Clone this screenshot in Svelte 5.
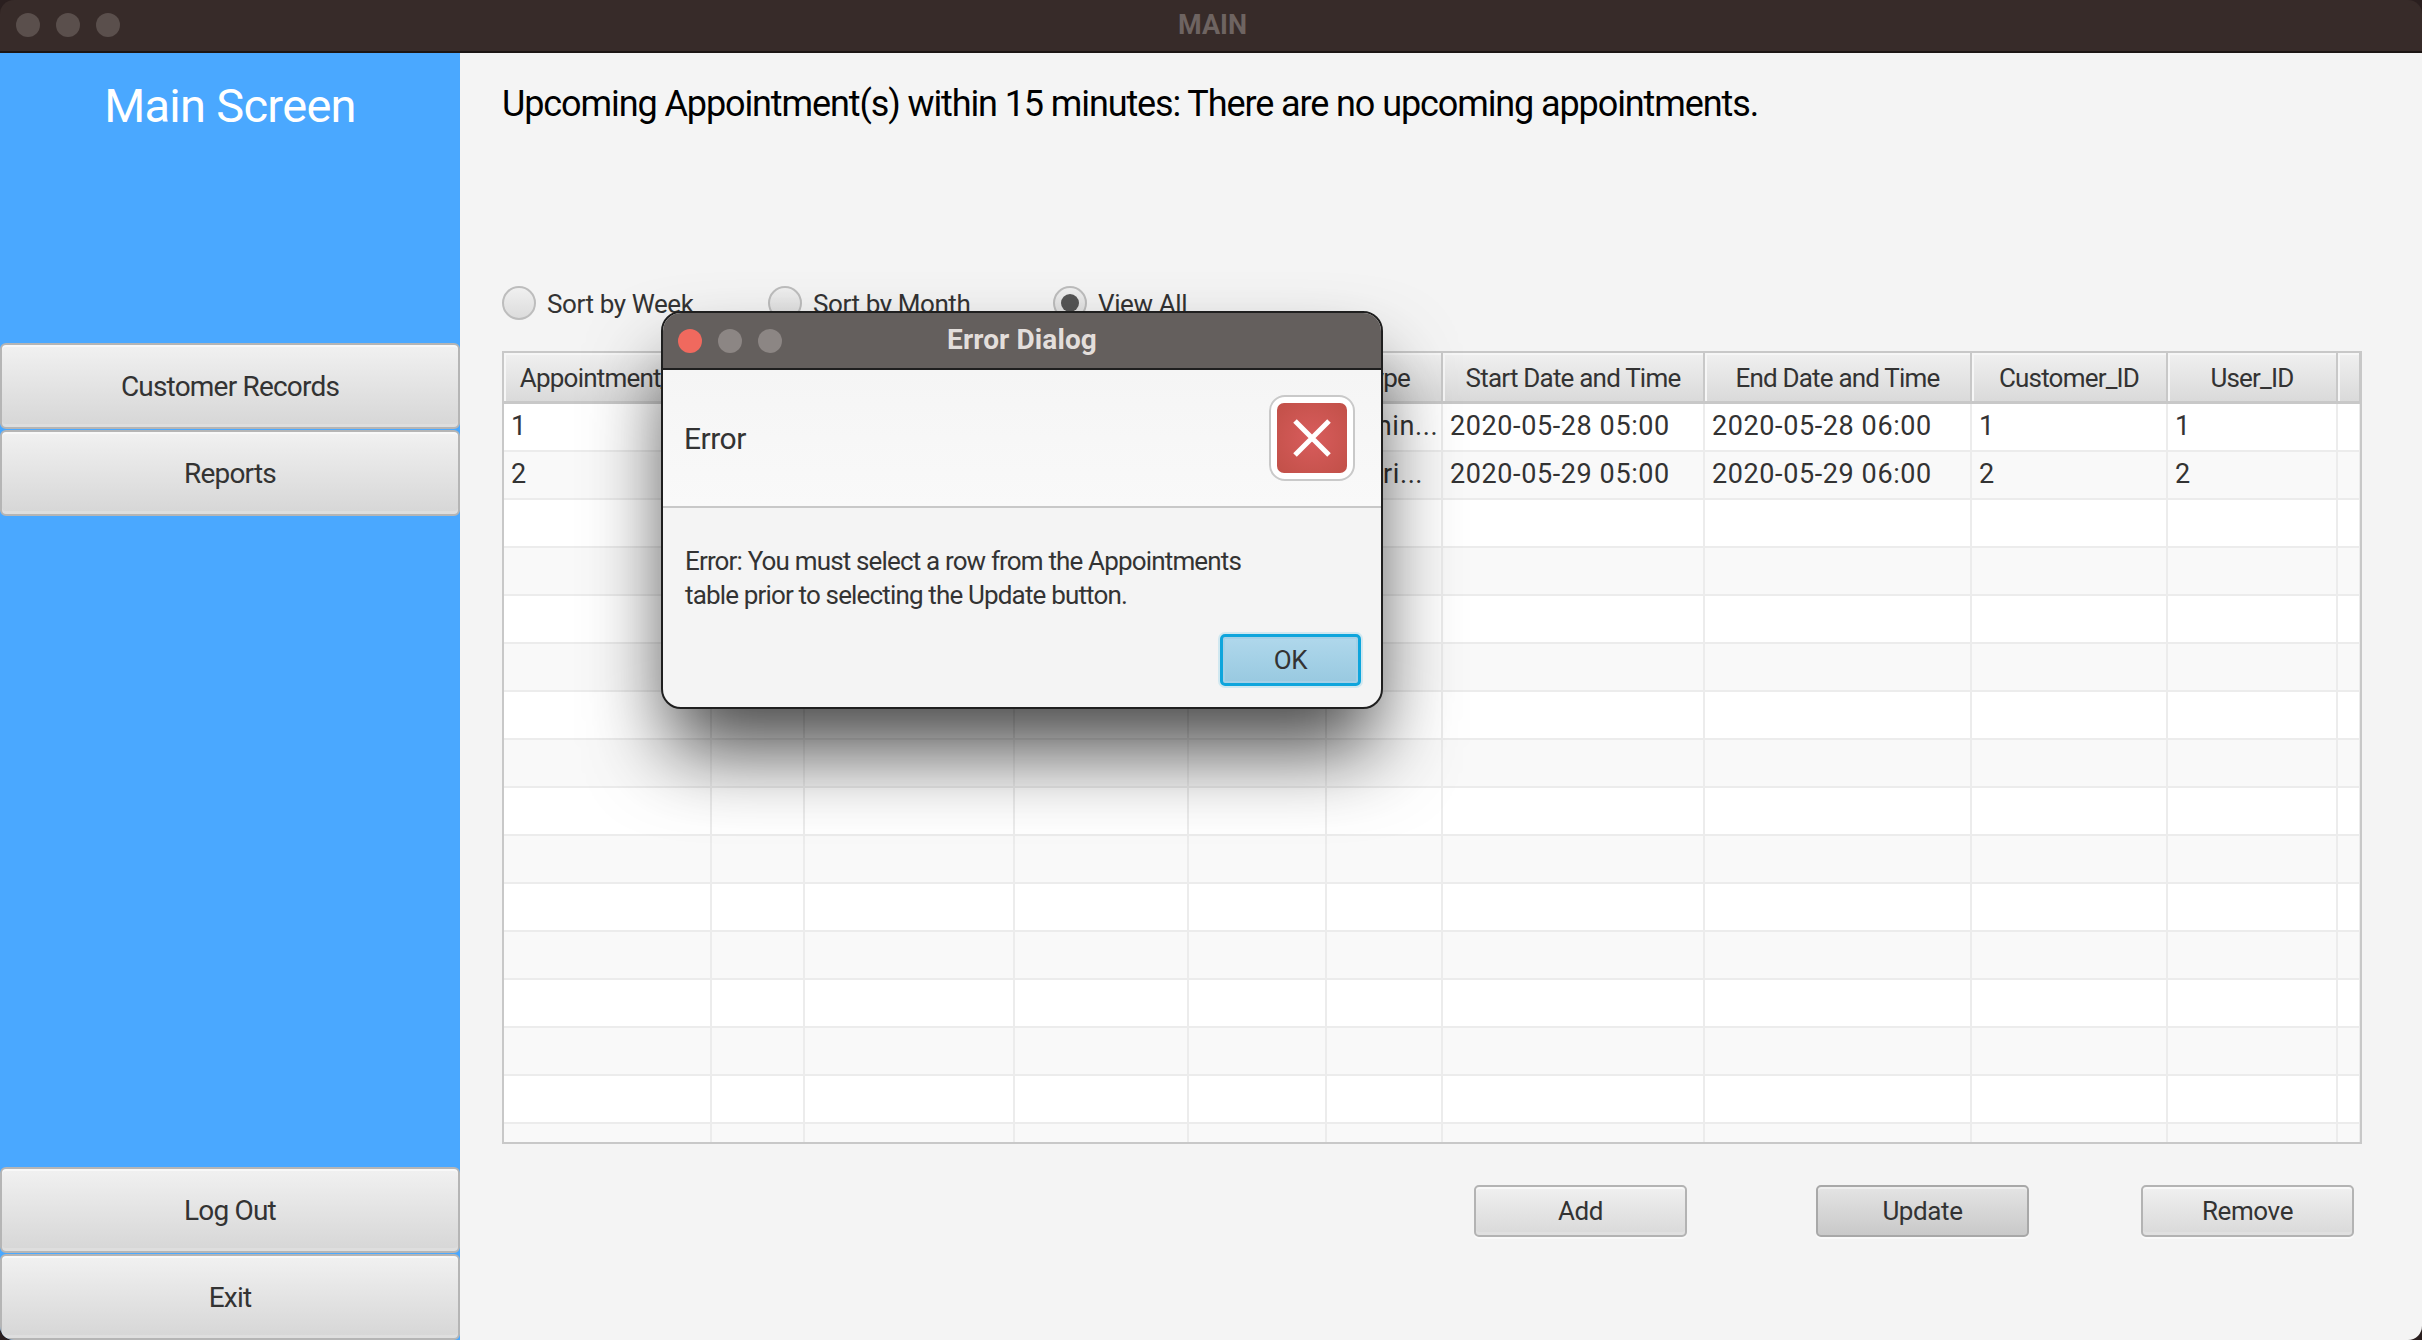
<script>
  const widths = [208, 93, 210, 174, 138, 116, 262, 267, 196, 170, 23];
  const headers = ['Appointment_ID', '', '', '', '', 'Type', 'Start Date and Time', 'End Date and Time', 'Customer_ID', 'User_ID', ''];
  const rows = [
    ['1', '', '', '', '', 'Admin...', '2020-05-28 05:00', '2020-05-28 06:00', '1', '1', ''],
    ['2', '', '', '', '', 'Debri...', '2020-05-29 05:00', '2020-05-29 06:00', '2', '2', ''],
    ...Array.from({ length: 14 }, () => Array(11).fill(''))
  ];
  const template = widths.map((w) => w + 'px').join(' ');
</script>

<div class="window">
  <header class="titlebar">
    <div class="lights">
      <span></span><span></span><span></span>
    </div>
    <div class="win-title">MAIN</div>
  </header>

  <div class="content">
    <aside class="sidebar">
      <h1>Main Screen</h1>
      <div class="nav-group top">
        <button class="nav-btn">Customer Records</button>
        <button class="nav-btn">Reports</button>
      </div>
      <div class="nav-group">
        <button class="nav-btn">Log Out</button>
        <button class="nav-btn">Exit</button>
      </div>
    </aside>

    <main class="main">
      <h2>Upcoming Appointment(s) within 15 minutes: There are no upcoming appointments.</h2>

      <div class="radios">
        <label class="radio r1"><span class="dot"></span>Sort by Week</label>
        <label class="radio r2"><span class="dot"></span>Sort by Month</label>
        <label class="radio"><span class="dot on"></span>View All</label>
      </div>

      <div class="table">
        <div class="row head" style="grid-template-columns: {template}">
          {#each headers as h}
            <div class="th">{h}</div>
          {/each}
        </div>
        {#each rows as row, i}
          <div class="row" class:odd={i % 2 === 1} style="grid-template-columns: {template}">
            {#each row as cell}
              <div class="td">{cell}</div>
            {/each}
          </div>
        {/each}
      </div>

      <div class="actions">
        <button class="btn add">Add</button>
        <button class="btn update">Update</button>
        <button class="btn">Remove</button>
      </div>
    </main>
  </div>

  <div class="dialog">
    <div class="dlg-title">
      <div class="dlg-lights">
        <span class="close"></span><span></span><span></span>
      </div>
      <div class="dlg-name">Error Dialog</div>
    </div>
    <div class="dlg-head">
      <span>Error</span>
      <div class="err-icon">
        <div class="err-inner">
          <svg width="44" height="44" viewBox="0 0 44 44">
            <path d="M5 5 L39 39 M39 5 L5 39" stroke="#fff" stroke-width="5" fill="none" />
          </svg>
        </div>
      </div>
    </div>
    <div class="dlg-body">
      <p>Error: You must select a row from the Appointments<br />table prior to selecting the Update button.</p>
      <div class="dlg-actions">
        <button class="ok">OK</button>
      </div>
    </div>
  </div>
</div>

<style>
  :global(body) {
    margin: 0;
    background: #2a1f1f;
  }

  .window {
    position: relative;
    width: 2422px;
    height: 1340px;
    display: flex;
    flex-direction: column;
    overflow: hidden;
    border-radius: 14px;
    font-family: Roboto, Inter, "Liberation Sans", sans-serif;
    color: #333;
  }

  .titlebar {
    height: 53px;
    box-sizing: border-box;
    flex: none;
    display: flex;
    align-items: center;
    position: relative;
    padding-bottom: 2px;
    background: #372b29;
    border-bottom: 2px solid #1c1514;
  }

  .lights {
    display: flex;
    gap: 16px;
    margin-left: 16px;
  }

  .lights span {
    width: 24px;
    height: 24px;
    border-radius: 50%;
    background: #5a4f4c;
  }

  .win-title {
    position: absolute;
    left: 3px;
    right: 0;
    text-align: center;
    font-size: 27px;
    font-weight: 700;
    color: #6e6461;
  }

  .content {
    flex: 1;
    display: flex;
    min-height: 0;
  }

  .sidebar {
    width: 460px;
    flex: none;
    display: flex;
    flex-direction: column;
    background: #4aa8ff;
  }

  .sidebar h1 {
    margin: 23px 0 0;
    height: 267px;
    text-align: center;
    font-size: 47px;
    line-height: 60px;
    font-weight: 400;
    letter-spacing: -0.7px;
    color: #fff;
  }

  .nav-group {
    display: flex;
    flex-direction: column;
    gap: 1px;
  }

  .nav-group.top {
    flex: 1;
  }

  .nav-btn {
    width: 460px;
    height: 86px;
    box-sizing: border-box;
    border: 2px solid #b5b5b5;
    border-radius: 6px;
    background: linear-gradient(#f1f1f1, #d6d6d6);
    box-shadow: inset 0 2px 0 #f8f8f8, inset 0 -3px 0 #dedede;
    font: inherit;
    font-size: 28px;
    letter-spacing: -0.8px;
    color: #333;
    padding: 0;
  }

  .main {
    flex: 1;
    min-width: 0;
    display: flex;
    flex-direction: column;
    box-sizing: border-box;
    padding: 0 60px 0 42px;
    background: #f4f4f4;
  }

  .main h2 {
    margin: 27px 0 0;
    height: 206px;
    font-size: 36px;
    line-height: 48px;
    font-weight: 400;
    letter-spacing: -1.1px;
    color: #000;
    white-space: nowrap;
  }

  .radios {
    display: flex;
    height: 34px;
    align-items: center;
  }

  .radio {
    display: flex;
    align-items: center;
    gap: 11px;
    padding-top: 2px;
    font-size: 26px;
    letter-spacing: -0.4px;
    white-space: nowrap;
  }

  .r1 {
    width: 266px;
  }

  .r2 {
    width: 285px;
  }

  .dot {
    width: 34px;
    height: 34px;
    margin-top: -2px;
    box-sizing: border-box;
    border-radius: 50%;
    border: 2px solid #bdbdbd;
    background: linear-gradient(#f0f0f0, #dcdcdc);
    position: relative;
  }

  .dot.on::after {
    content: '';
    position: absolute;
    inset: 6px;
    border-radius: 50%;
    background: #555;
  }

  .table {
    margin-top: 31px;
    height: 793px;
    box-sizing: border-box;
    border: 2px solid #c8c8c8;
    background: #fff;
    overflow: hidden;
  }

  .row {
    display: grid;
    height: 48px;
    box-sizing: border-box;
    border-bottom: 2px solid #ececec;
    background: #fff;
  }

  .row.odd {
    background: #f9f9f9;
  }

  .row.head {
    height: 51px;
    border-bottom: 3px solid #c8c8c8;
    background: none;
  }

  .th {
    border-right: 2px solid #c8c8c8;
    padding-top: 3px;
    background: linear-gradient(#f0f0f0, #dadada);
    box-shadow: inset 2px 2px 0 #f6f6f6;
    text-align: center;
    font-size: 26px;
    line-height: 45px;
    letter-spacing: -0.8px;
    white-space: nowrap;
    overflow: hidden;
  }

  .td {
    border-right: 2px solid #ececec;
    padding-left: 7px;
    font-size: 27px;
    line-height: 45px;
    letter-spacing: 0.6px;
    white-space: nowrap;
    overflow: hidden;
  }

  .actions {
    display: flex;
    justify-content: flex-end;
    margin-top: 41px;
    padding-right: 8px;
  }

  .btn {
    width: 213px;
    height: 52px;
    box-sizing: border-box;
    padding: 0;
    border: 2px solid #b3b3b3;
    border-radius: 5px;
    background: linear-gradient(#f0f0f0, #d9d9d9);
    box-shadow: inset 0 2px 0 #f8f8f8, inset 0 -3px 0 #e0e0e0, 0 2px 0 #fafafa;
    font: inherit;
    font-size: 26px;
    letter-spacing: -0.4px;
    color: #333;
  }

  .btn.add {
    margin-right: 129px;
  }

  .btn.update {
    margin-right: 112px;
    background: linear-gradient(#e4e4e4, #c9c9c9);
    border-color: #a8a8a8;
    box-shadow: inset 0 2px 0 #eee, 0 2px 0 #fafafa;
  }

  .dialog {
    position: absolute;
    left: 661px;
    top: 311px;
    width: 722px;
    height: 398px;
    box-sizing: border-box;
    display: flex;
    flex-direction: column;
    border: 2px solid #1f1f1f;
    border-radius: 20px;
    overflow: hidden;
    background: #f4f4f4;
    box-shadow: 0 48px 80px -8px rgba(0, 0, 0, 0.72);
  }

  .dlg-title {
    height: 57px;
    flex: none;
    box-sizing: border-box;
    position: relative;
    display: flex;
    align-items: center;
    background: #645f5d;
    border-bottom: 2px solid #1f1f1f;
  }

  .dlg-lights {
    display: flex;
    gap: 16px;
    margin-left: 15px;
  }

  .dlg-lights span {
    width: 24px;
    height: 24px;
    border-radius: 50%;
    background: #8c8684;
  }

  .dlg-lights .close {
    background: #f0695e;
  }

  .dlg-name {
    position: absolute;
    left: 0;
    right: 0;
    top: 9px;
    text-align: center;
    font-size: 28px;
    line-height: 36px;
    font-weight: 700;
    letter-spacing: 0.1px;
    color: #e3dedb;
  }

  .dlg-head {
    height: 138px;
    flex: none;
    box-sizing: border-box;
    display: flex;
    align-items: center;
    justify-content: space-between;
    padding: 0 26px 0 21px;
    background: linear-gradient(#f5f5f5, #f9f9f9);
    border-bottom: 2px solid #c8c8c8;
    font-size: 30px;
    letter-spacing: -0.5px;
  }

  .err-icon {
    width: 86px;
    height: 86px;
    box-sizing: border-box;
    display: flex;
    align-items: center;
    justify-content: center;
    border: 2px solid #c9c9c9;
    border-radius: 16px;
    background: #fff;
  }

  .err-inner {
    width: 70px;
    height: 70px;
    display: flex;
    align-items: center;
    justify-content: center;
    border-radius: 7px;
    background: radial-gradient(circle, #d85c5c, #c15048);
  }

  .dlg-body {
    flex: 1;
    padding: 36px 20px 0 22px;
  }

  .dlg-body p {
    margin: 0;
    font-size: 26px;
    line-height: 34px;
    letter-spacing: -0.84px;
  }

  .dlg-actions {
    display: flex;
    justify-content: flex-end;
    margin-top: 22px;
  }

  .ok {
    width: 141px;
    height: 52px;
    box-sizing: border-box;
    padding: 0;
    border: 3px solid #0ea5dc;
    border-radius: 5px;
    background: linear-gradient(#b0d8ec, #98c9e0);
    box-shadow: inset 0 0 0 2px #a4d0e6, 0 0 0 2px rgba(14, 165, 220, 0.15);
    font: inherit;
    font-size: 26px;
    letter-spacing: -0.3px;
    color: #333;
  }
</style>
